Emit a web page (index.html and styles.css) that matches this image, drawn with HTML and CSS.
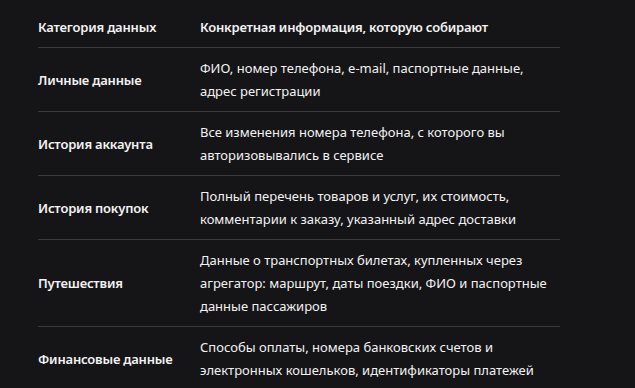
FILE: index.html
```html
<!DOCTYPE html>
<html lang="ru">
<head>
<meta charset="utf-8">
<link rel="stylesheet" href="styles.css">
</head>
<body>
<div class="wrap">
<table class="data">
<thead>
<tr><th class="c1">Категория данных</th><th class="c2">Конкретная информация, которую собирают</th></tr>
</thead>
<tbody>
<tr><td class="c1">Личные данные</td><td class="c2">ФИО, номер телефона, e-mail, паспортные данные, адрес регистрации</td></tr>
<tr><td class="c1">История аккаунта</td><td class="c2">Все изменения номера телефона, с которого вы авторизовывались в сервисе</td></tr>
<tr><td class="c1">История покупок</td><td class="c2">Полный перечень товаров и услуг, их стоимость, комментарии к заказу, указанный адрес доставки</td></tr>
<tr><td class="c1">Путешествия</td><td class="c2">Данные о транспортных билетах, купленных через агрегатор: маршрут, даты поездки, ФИО и паспортные данные пассажиров</td></tr>
<tr><td class="c1">Финансовые данные</td><td class="c2">Способы оплаты, номера банковских счетов и электронных кошельков, идентификаторы платежей</td></tr>
</tbody>
</table>
</div>
</body>
</html>
```
FILE: styles.css
```css
html, body {
  margin: 0;
  padding: 0;
  background: #151517;
}
.wrap {
  padding: 7px 0 0 38px;
}
.data {
  border-collapse: collapse;
  width: 522px;
  font-family: "Noto Sans", "Open Sans", sans-serif;
  font-size: 13px;
  line-height: 23px;
  color: #f2f2f2;
}
.data th, .data td {
  text-align: left;
  vertical-align: middle;
  padding: 9px 0 8px 0;
  border-bottom: 1px solid #3a3a3c;
}
.data th {
  font-weight: 600;
  letter-spacing: -0.2px;
}
.data .c1 {
  width: 162px;
  font-weight: 600;
  letter-spacing: -0.2px;
}
.data .c2 {
  width: 360px;
}
.data tbody tr:last-child td {
  border-bottom: none;
}
```
